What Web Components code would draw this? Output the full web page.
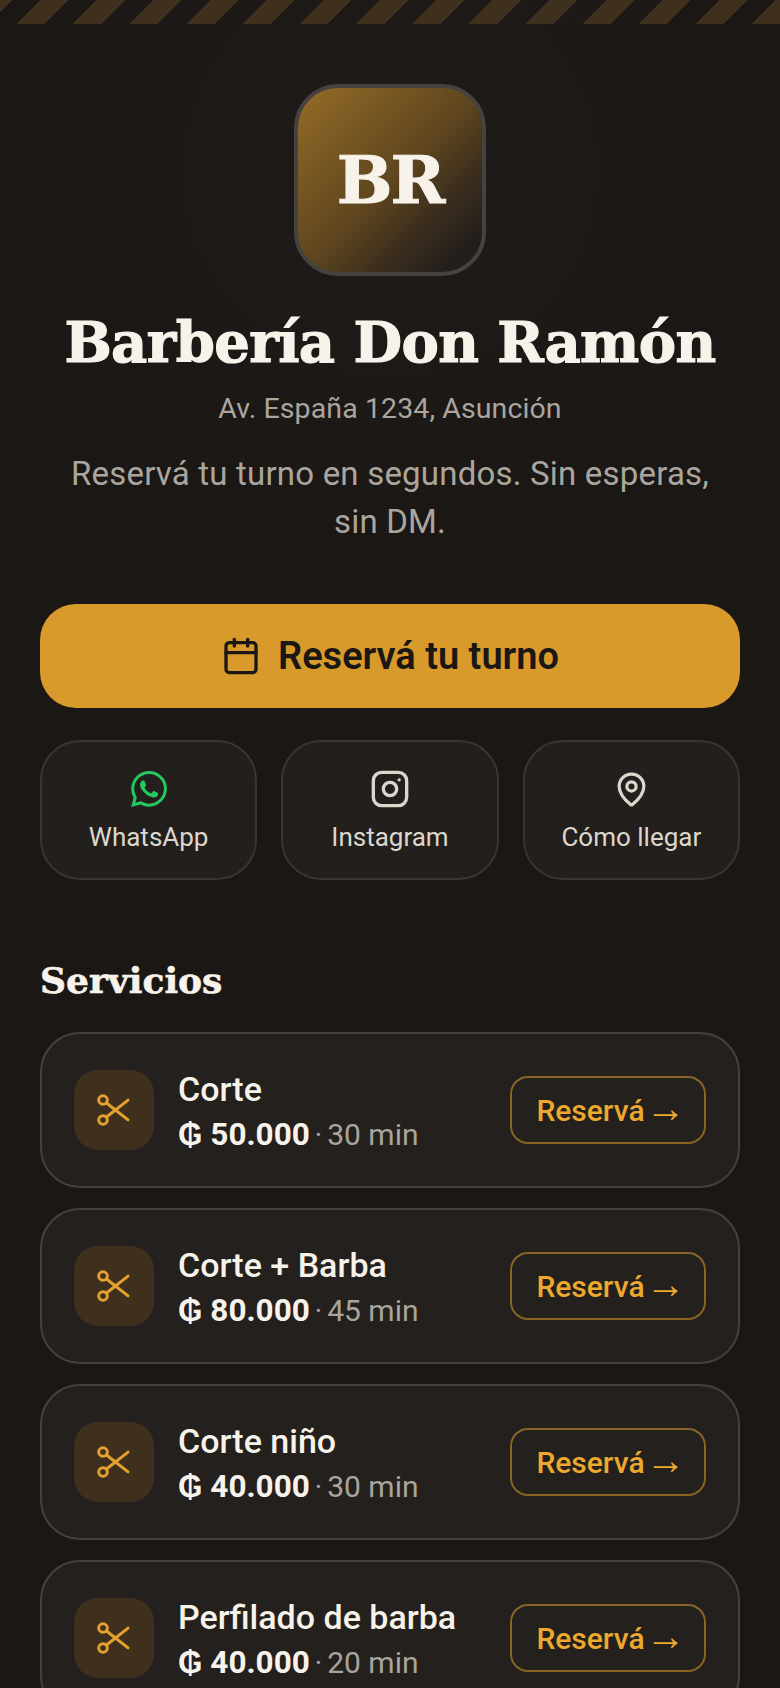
<!DOCTYPE html>
<html lang="es">
<head>
<meta charset="utf-8">
<title>Barbería Don Ramón</title>
<style>
  html, body { margin: 0; background: #1a1715; }
  body { height: 1688px; overflow: hidden; font-family: "Roboto", "Liberation Sans", sans-serif; color: #f7f2ea; }
</style>
</head>
<body>
<shop-page>
  <shop-header slot="header" initials="BR" address="Av. España 1234, Asunción" tagline="Reservá tu turno en segundos. Sin esperas, sin DM.">Barbería Don Ramón</shop-header>
  <cta-button slot="cta">Reservá tu turno</cta-button>
  <quick-links slot="links">
    <quick-link icon="whatsapp">WhatsApp</quick-link>
    <quick-link icon="instagram">Instagram</quick-link>
    <quick-link icon="pin">Cómo llegar</quick-link>
  </quick-links>
  <service-card price="₲ 50.000" duration="30 min">Corte</service-card>
  <service-card price="₲ 80.000" duration="45 min">Corte + Barba</service-card>
  <service-card price="₲ 40.000" duration="30 min">Corte niño</service-card>
  <service-card price="₲ 40.000" duration="20 min">Perfilado de barba</service-card>
</shop-page>

<script>
// Icons are kept here so every component can pick the one it needs
const lineIcon = (body, size = 40, stroke = 2) => `<svg width="${size}" height="${size}" viewBox="0 0 24 24" fill="none" stroke="currentColor" stroke-width="${stroke}" stroke-linecap="round" stroke-linejoin="round">${body}</svg>`;
const icons = {
  calendar: lineIcon('<path d="M8 2v4"/><path d="M16 2v4"/><rect x="3" y="4" width="18" height="18" rx="2"/><path d="M3 10h18"/>'),
  instagram: lineIcon('<rect x="2" y="2" width="20" height="20" rx="5"/><circle cx="12" cy="12" r="4"/><path d="M17.5 6.5h.01"/>'),
  pin: lineIcon('<path d="M20 10c0 5-5.5 10.2-7.4 11.8a1 1 0 0 1-1.2 0C9.5 20.2 4 15 4 10a8 8 0 0 1 16 0"/><circle cx="12" cy="10" r="3"/>', 37, 2.1),
  scissors: lineIcon('<circle cx="5.4" cy="6" r="2.6"/><circle cx="5.4" cy="18" r="2.6"/><path d="M7.5 7.8 20.4 17.9"/><path d="M7.5 16.2 20.4 6.1"/>', 40, 1.8),
  whatsapp: `<svg width="36" height="36" viewBox="0 0 24 24" fill="#25c760"><path d="M17.472 14.382c-.297-.149-1.758-.867-2.03-.967-.273-.099-.471-.148-.67.15-.197.297-.767.966-.94 1.164-.173.199-.347.223-.644.075-.297-.15-1.255-.463-2.39-1.475-.883-.788-1.48-1.761-1.653-2.059-.173-.297-.018-.458.13-.606.134-.133.298-.347.446-.52.149-.174.198-.298.298-.497.099-.198.05-.371-.025-.52-.075-.149-.669-1.612-.916-2.207-.242-.579-.487-.5-.669-.51-.173-.008-.371-.01-.57-.01-.198 0-.52.074-.792.372-.272.297-1.04 1.016-1.04 2.479 0 1.462 1.065 2.875 1.213 3.074.149.198 2.096 3.2 5.077 4.487.709.306 1.262.489 1.694.625.712.227 1.36.195 1.871.118.571-.085 1.758-.719 2.006-1.413.248-.694.248-1.289.173-1.413-.074-.124-.272-.198-.57-.347m-5.421 7.403h-.004a9.87 9.87 0 01-5.031-1.378l-.361-.214-3.741.982.998-3.648-.235-.374a9.86 9.86 0 01-1.51-5.26c.001-5.45 4.436-9.884 9.888-9.884 2.64 0 5.122 1.03 6.988 2.898a9.825 9.825 0 012.893 6.994c-.003 5.45-4.437 9.884-9.885 9.884m8.413-18.297A11.815 11.815 0 0012.05 0C5.495 0 .16 5.335.157 11.892c0 2.096.547 4.142 1.588 5.945L.057 24l6.305-1.654a11.882 11.882 0 005.683 1.448h.005c6.554 0 11.89-5.335 11.893-11.893a11.821 11.821 0 00-3.48-8.413Z"/></svg>`,
};

const SERIF = '"DejaVu Serif", "Liberation Serif", serif';

// 'shop-page' holds the striped bar and the page sections
class ShopPage extends HTMLElement {
  constructor() {
    super();
    this.attachShadow({ mode: 'open' });
    this.shadowRoot.innerHTML = `
      <style>
        :host { display: block; background: radial-gradient(circle at 50% 170px, #1f1b19 0, #1a1715 380px); }
        .stripes { height: 24px; background: repeating-linear-gradient(-45deg, #3f2f1d 0 20px, transparent 20px 40px); }
        main { padding: 60px 40px 0; display: flex; flex-direction: column; }
        h2 { margin: 76px 0 0; font: 700 36px/48px ${SERIF}; -webkit-text-stroke: .6px #f7f2ea; color: #f7f2ea; }
        .list { margin-top: 28px; display: flex; flex-direction: column; gap: 20px; }
        ::slotted(cta-button) { margin-top: 58px; }
        ::slotted(quick-links) { margin-top: 32px; }
      </style>
      <div class="stripes"></div>
      <main>
        <slot name="header"></slot>
        <slot name="cta"></slot>
        <slot name="links"></slot>
        <h2>Servicios</h2>
        <div class="list"><slot></slot></div>
      </main>`;
  }
}

// 'shop-header' logo, name and address of the shop
class ShopHeader extends HTMLElement {
  constructor() {
    super();
    this.attachShadow({ mode: 'open' });
    this.shadowRoot.innerHTML = `
      <style>
        :host { display: flex; flex-direction: column; align-items: center; text-align: center; }
        .logo { box-sizing: border-box; width: 192px; height: 192px; border: 4px solid #454240; border-radius: 44px;
          background: linear-gradient(135deg, #8f6826 5%, #5f461f 50%, #3a2d1d 72%, #221e1b 90%);
          display: flex; align-items: center; justify-content: center;
          font: 700 66px/1 ${SERIF}; letter-spacing: -2px; -webkit-text-stroke: 1px #f7f2ea; color: #f7f2ea; }
        h1 { margin: 28px 0 0; font: 700 56px/76px ${SERIF}; letter-spacing: -.6px; -webkit-text-stroke: 1.2px #f7f2ea; color: #f7f2ea; white-space: nowrap; }
        .address { margin-top: 9px; font-size: 28.5px; letter-spacing: .1px; line-height: 40px; color: #aaa69f; }
        .tagline { margin: 21px 0 0; width: 660px; font-size: 33px; letter-spacing: .2px; line-height: 48px; color: #aaa69f; }
      </style>
      <div class="logo"></div>
      <h1><slot></slot></h1>
      <div class="address"></div>
      <p class="tagline"></p>`;
  }

  connectedCallback() {
    this.shadowRoot.querySelector('.logo').textContent = this.getAttribute('initials');
    this.shadowRoot.querySelector('.address').textContent = this.getAttribute('address');
    this.shadowRoot.querySelector('.tagline').textContent = this.getAttribute('tagline');
  }
}

// 'cta-button' the big amber button
class CtaButton extends HTMLElement {
  constructor() {
    super();
    this.attachShadow({ mode: 'open' });
    this.shadowRoot.innerHTML = `
      <style>
        :host { display: flex; align-items: center; justify-content: center; gap: 17px; height: 104px;
          background: #d99a2c; border-radius: 36px; color: #1a1715; font-size: 38px; font-weight: 600; }
        svg { display: block; }
      </style>
      ${icons.calendar}
      <span><slot></slot></span>`;
  }
}

// 'quick-links' row of three equal boxes
class QuickLinks extends HTMLElement {
  constructor() {
    super();
    this.attachShadow({ mode: 'open' });
    this.shadowRoot.innerHTML = `
      <style>
        :host { display: grid; grid-template-columns: repeat(3, 1fr); gap: 24px; }
      </style>
      <slot></slot>`;
  }
}

class QuickLink extends HTMLElement {
  constructor() {
    super();
    this.attachShadow({ mode: 'open' });
    this.shadowRoot.innerHTML = `
      <style>
        :host { box-sizing: border-box; display: flex; flex-direction: column; align-items: center; height: 140px;
          padding-top: 27px; gap: 10px; background: #231f1c; border: 2px solid #393532; border-radius: 40px;
          color: #dcd7cd; font-size: 26px; line-height: 36px; }
        .icon { height: 40px; display: flex; align-items: center; }
      </style>
      <span class="icon"></span>
      <span><slot></slot></span>`;
  }

  connectedCallback() {
    this.shadowRoot.querySelector('.icon').innerHTML = icons[this.getAttribute('icon')];
  }
}

// 'service-card' one row of the services list
class ServiceCard extends HTMLElement {
  constructor() {
    super();
    this.attachShadow({ mode: 'open' });
    this.shadowRoot.innerHTML = `
      <style>
        :host { box-sizing: border-box; display: flex; align-items: center; height: 156px; padding: 0 32px;
          background: #24201d; border: 2px solid #45413d; border-radius: 40px; }
        .tile { flex: none; width: 80px; height: 80px; border-radius: 24px; background: #3f2f1d; color: #e3a02c;
          display: flex; align-items: center; justify-content: center; }
        .info { flex: 1; margin: 4px 0 0 24px; min-width: 0; }
        .name { font-size: 34px; line-height: 44px; font-weight: 500; color: #f7f2ea; }
        .meta { margin-top: 2px; font-size: 30px; line-height: 44px; word-spacing: -2.7px; color: #a8a49e; }
        .price { font-size: 31.5px; font-weight: 700; word-spacing: 0; color: #f7f2ea; }
        .duration { word-spacing: 0; }
        .book { flex: none; box-sizing: border-box; width: 196px; height: 68px; padding-left: 6px; border: 2px solid #8a6424; border-radius: 18px;
          display: flex; align-items: center; justify-content: center; gap: 1px; color: #eba92f; font-size: 30px; font-weight: 500; }
        .arrow { margin-bottom: 4px; font-family: "Liberation Sans", sans-serif; font-size: 40px; line-height: 1; }
      </style>
      <div class="tile">${icons.scissors}</div>
      <div class="info">
        <div class="name"><slot></slot></div>
        <div class="meta"><span class="price"></span> · <span class="duration"></span></div>
      </div>
      <div class="book"><span>Reservá</span><span class="arrow">→</span></div>`;
  }

  connectedCallback() {
    this.shadowRoot.querySelector('.price').textContent = this.getAttribute('price');
    this.shadowRoot.querySelector('.duration').textContent = this.getAttribute('duration');
  }
}

customElements.define('shop-page', ShopPage);
customElements.define('shop-header', ShopHeader);
customElements.define('cta-button', CtaButton);
customElements.define('quick-links', QuickLinks);
customElements.define('quick-link', QuickLink);
customElements.define('service-card', ServiceCard);
</script>
</body>
</html>
